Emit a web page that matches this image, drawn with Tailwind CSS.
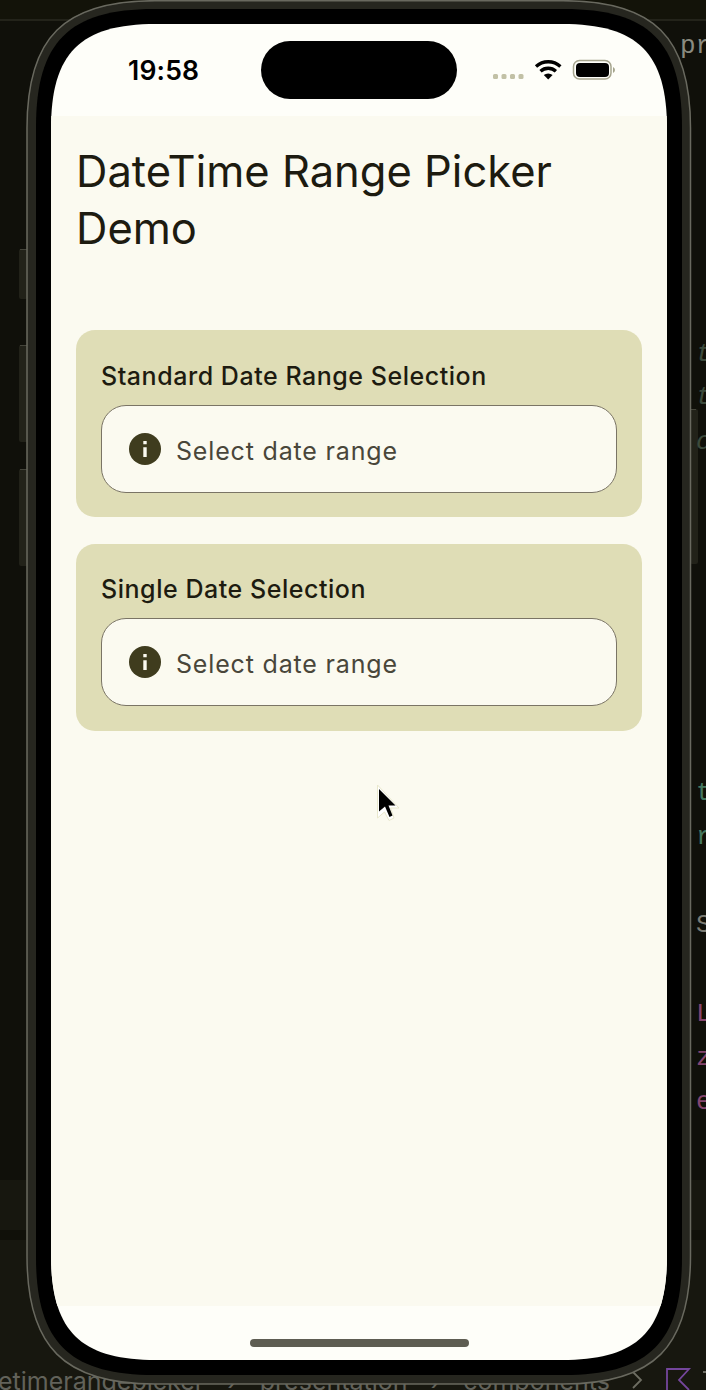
<!DOCTYPE html>
<html lang="en">
<head>
<meta charset="utf-8">
<title>DateTime Range Picker Demo</title>
<script src="https://cdn.jsdelivr.net/npm/@tailwindcss/browser@4"></script>
</head>
<body class="bg-[#10100a]">
<div class="relative h-[1390px] w-[706px] overflow-hidden bg-[#10100a] font-['Inter',sans-serif]">

  <!-- Editor window behind the simulator -->
  <svg class="absolute inset-0" width="706" height="1390" viewBox="0 0 706 1390">
    <rect width="706" height="20" fill="#131309"/>
    <rect y="19" width="706" height="2" fill="#23231a"/>
    <rect y="1180" width="706" height="210" fill="#17170f"/>
    <rect y="1230" width="706" height="10" fill="#101009"/>
    <g fill="#222219">
      <rect x="19" y="249" width="9" height="50" rx="2"/>
      <rect x="19" y="345" width="9" height="97" rx="2"/>
      <rect x="19" y="469" width="9" height="97" rx="2"/>
      <rect x="690" y="409" width="8" height="155" rx="2"/>
    </g>
    <path d="M20 249.500H27M20 345.500H27M20 469.500H27M691 409.500H696" stroke="#44443a"/>
  </svg>
  <div class="absolute inset-0 text-[26px] leading-8 font-['Liberation_Mono',monospace]">
    <div class="absolute top-[30px] left-[680px] text-[#8b8b80]">pr</div>
    <div class="absolute top-[338px] left-[696px] italic text-[#3c4a3c]">t</div>
    <div class="absolute top-[381px] left-[696px] italic text-[#3c4a3c]">t</div>
    <div class="absolute top-[426px] left-[696px] italic text-[#3c4a3c]">o</div>
    <div class="absolute top-[777px] left-[696px] text-[#45775f]">t</div>
    <div class="absolute top-[821px] left-[696px] text-[#45775f]">r</div>
    <div class="absolute top-[909px] left-[696px] text-[#7b7b73]">S</div>
    <div class="absolute top-[998px] left-[696px] text-[#85456f]">L</div>
    <div class="absolute top-[1042px] left-[696px] text-[#85456f]">z</div>
    <div class="absolute top-[1086px] left-[696px] text-[#85456f]">e</div>
  </div>
  <div class="absolute top-[1365px] left-[-2px] flex gap-[23px] text-[25px] leading-8 whitespace-nowrap text-[#62625a]">
    <span>etimerangepicker</span><span>›</span><span>presentation</span><span>›</span><span>components</span>
  </div>
  <svg class="absolute top-[1366px] left-[628px]" width="78" height="24" fill="none" stroke-width="1.800">
    <path d="M5 6l8 8-8 8" stroke="#6d6d62"/>
    <path d="M39 24V3h22L51 14l10 10" stroke="#74469c"/>
    <path d="M75 6h4" stroke="#77776e"/>
  </svg>

  <!-- Phone body -->
  <svg class="absolute inset-0" width="706" height="1390" viewBox="0 0 706 1390">
    <path fill="#26261f" stroke="#69695f" stroke-width="1.500" d="M27 128C27 37 64 .7 155 .7H563C654 .7 690.500 37 690.500 128V1256C690.500 1347 654 1384 563 1384H155C64 1384 27 1347 27 1256Z"/>
    <path fill="#000" d="M36 127C36 42 69 9 154 9H564C649 9 682 42 682 127V1257C682 1342 649 1375 564 1375H154C69 1375 36 1342 36 1257Z"/>
  </svg>

  <!-- Screen -->
  <div class="absolute top-[24px] left-[51px] flex h-[1336px] w-[616px] flex-col bg-[#fefef9] [clip-path:path('M0_105C0_29_29_0_105_0H511C587_0_616_29_616_105V1231C616_1307_587_1336_511_1336H105C29_1336_0_1307_0_1231Z')]">
    <header class="relative flex h-[92px] shrink-0 items-start justify-between">
      <div class="mt-[30px] ml-[77px] text-[26.500px] leading-8 font-semibold tracking-[0.2px] text-black">19:58</div>
      <div class="absolute top-[17px] left-[210px] h-[58px] w-[196px] rounded-full bg-black"></div>
      <svg class="mt-[32px] mr-[50px]" width="126" height="28" viewBox="0 0 126 28">
        <g fill="#c2c1a6"><rect x="2" y="18" width="5" height="5" rx="1.500"/><rect x="10.500" y="18" width="5" height="5" rx="1.500"/><rect x="19" y="18" width="5" height="5" rx="1.500"/><rect x="27.500" y="18" width="5" height="5" rx="1.500"/></g>
        <g fill="none" stroke="#000" stroke-width="3.300">
          <path d="M45 10.500a18 18 0 0 1 24.400 0"/>
          <path d="M49.500 15.300a11.300 11.300 0 0 1 15.400 0"/>
        </g>
        <path d="M52.800 19.100a6.500 6.500 0 0 1 8.800 0L57.200 23.600Z"/>
        <rect x="82.500" y="4.500" width="37.500" height="18.500" rx="6" fill="none" stroke="#a5a48d" stroke-width="1.500"/>
        <rect x="85" y="7" width="33" height="14" rx="4"/>
        <path d="M122 11v6q2-1 2-3t-2-3z" fill="#a5a48d"/>
      </svg>
    </header>
    <main class="flex h-[1190px] shrink-0 flex-col bg-[#fbfaf0] px-[25px] pt-[27px]">
      <h1 class="text-[43.500px] leading-[56.500px] text-[#1d1b10]">DateTime Range Picker<br>Demo</h1>
      <section class="mt-[74px] flex h-[187px] w-[566px] shrink-0 flex-col rounded-[19px] bg-[#dfddb6] px-[25px] pt-[28px]">
        <h2 class="text-[25px] leading-9 font-medium tracking-[0.540px] text-[#1d1b10]">Standard Date Range Selection</h2>
        <div class="mt-[11px] flex h-[88px] w-[516px] items-center rounded-[25px] border-[1.500px] border-[#7a7465] bg-[#fbfaf0] pl-[27px]">
          <svg width="32" height="32" viewBox="0 0 32 32"><circle cx="16" cy="16" r="16" fill="#3f3c1e"/><path d="M14.300 8h3.400v3.200h-3.400zM14.300 14.200h3.400V24h-3.400z" fill="#fbfaf0"/></svg>
          <span class="mt-[5px] ml-[15px] text-[25px] tracking-[0.830px] text-[#49463a]">Select date range</span>
        </div>
      </section>
      <section class="mt-[27px] flex h-[187px] w-[566px] shrink-0 flex-col rounded-[19px] bg-[#dfddb6] px-[25px] pt-[27px]">
        <h2 class="text-[25px] leading-9 font-medium tracking-[0.540px] text-[#1d1b10]">Single Date Selection</h2>
        <div class="mt-[11px] flex h-[88px] w-[516px] items-center rounded-[25px] border-[1.500px] border-[#7a7465] bg-[#fbfaf0] pl-[27px]">
          <svg width="32" height="32" viewBox="0 0 32 32"><circle cx="16" cy="16" r="16" fill="#3f3c1e"/><path d="M14.300 8h3.400v3.200h-3.400zM14.300 14.200h3.400V24h-3.400z" fill="#fbfaf0"/></svg>
          <span class="mt-[5px] ml-[15px] text-[25px] tracking-[0.830px] text-[#49463a]">Select date range</span>
        </div>
      </section>
    </main>
    <footer class="flex flex-1 justify-center pt-[33px]">
      <div class="h-[8px] w-[219px] rounded-full bg-[#5e5d52]"></div>
    </footer>
  </div>

  <!-- Pointer -->
  <svg class="absolute top-[780px] left-[370px]" width="36" height="46" viewBox="370 780 36 46">
    <path d="M377.500 785V818L384.500 812L389 820.500L394 818L390.500 808H399Z" fill="#fff" stroke="#e9e8cd"/>
    <path d="M379 789V811.500L385 806.500L389.500 817L392.500 815.500L388.500 805.500H395.500Z"/>
  </svg>
</div>
</body>
</html>
